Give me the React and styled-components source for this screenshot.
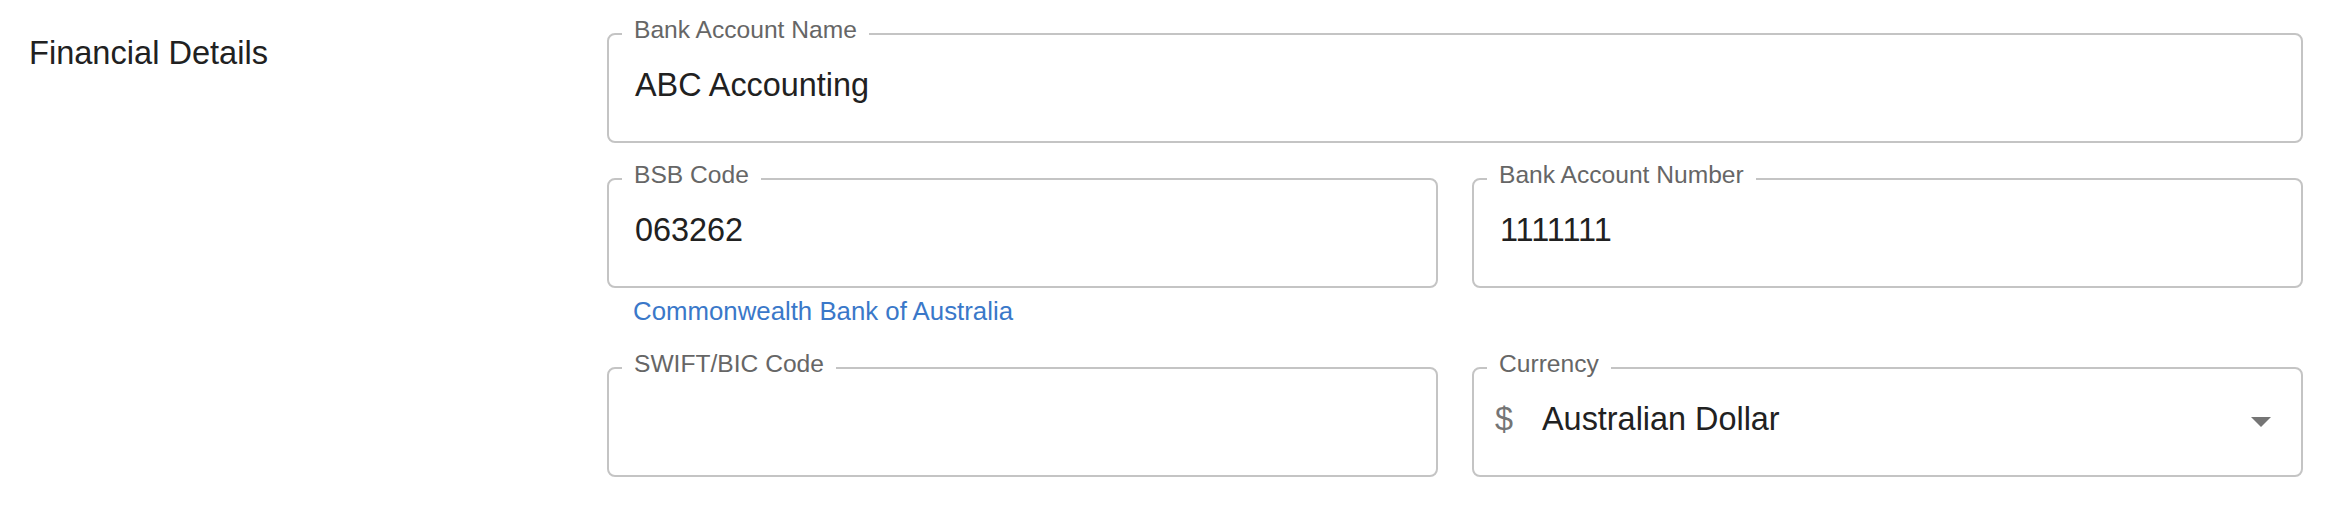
import React from 'react';
import styled, { createGlobalStyle } from 'styled-components';

const GlobalStyle = createGlobalStyle`
  body {
    margin: 0;
    background: #fff;
    font-family: "Liberation Sans", Arial, sans-serif;
  }
`;

const Section = styled.section`
  display: grid;
  grid-template-columns: 578px 1fr;
  box-sizing: border-box;
  height: 510px;
  padding: 29px 29px 0 29px;
`;

const SectionTitle = styled.h2`
  margin: 0;
  font-size: 32.6px;
  font-weight: 400;
  line-height: 48px;
  color: #212121;
`;

const FieldGrid = styled.div`
  display: grid;
  grid-template-columns: 1fr 1fr;
  column-gap: 34px;
  row-gap: 35px;
  align-content: start;
  padding-top: 4px;
`;

const Field = styled.div`
  grid-column: span ${(p) => p.$span || 1};
  min-width: 0;
`;

const Outline = styled.div`
  position: relative;
  box-sizing: border-box;
  height: 110px;
  display: flex;
  align-items: center;
  padding: 0 28px 5px ${(p) => (p.$select ? '21px' : '26px')};
  border: 2px solid #c4c4c4;
  border-radius: 8px;
`;

const FloatLabel = styled.span`
  position: absolute;
  top: -19px;
  left: 13px;
  padding: 0 12px;
  background: #fff;
  font-size: 24.6px;
  line-height: 28px;
  color: #666;
  white-space: nowrap;
`;

const Value = styled.span`
  font-size: 32.4px;
  line-height: 37px;
  color: #212121;
  white-space: nowrap;
`;

const Adornment = styled.span`
  margin-right: 29px;
  font-size: 32.4px;
  line-height: 37px;
  color: #757575;
`;

const Arrow = styled.svg`
  margin: 5px 2px 0 auto;
  flex-shrink: 0;
`;

const HelperText = styled.p`
  margin: 4px 0 2px 26px;
  font-size: 25.8px;
  line-height: 38px;
  color: #3a78c9;
`;

const TextField = ({ label, value, span, helper }) => (
  <Field $span={span}>
    <Outline>
      <FloatLabel>{label}</FloatLabel>
      <Value>{value}</Value>
    </Outline>
    {helper && <HelperText>{helper}</HelperText>}
  </Field>
);

const SelectField = ({ label, symbol, value }) => (
  <Field>
    <Outline $select>
      <FloatLabel>{label}</FloatLabel>
      <Adornment>{symbol}</Adornment>
      <Value>{value}</Value>
      <Arrow width="20" height="10" viewBox="0 0 20 10">
        <path d="M0 0 L20 0 L10 10 Z" fill="#757575" />
      </Arrow>
    </Outline>
  </Field>
);

const App = () => (
  <>
    <GlobalStyle />
    <Section>
      <SectionTitle>Financial Details</SectionTitle>
      <FieldGrid>
        <TextField span={2} label="Bank Account Name" value="ABC Accounting" />
        <TextField label="BSB Code" value="063262" helper="Commonwealth Bank of Australia" />
        <TextField label="Bank Account Number" value="1111111" />
        <TextField label="SWIFT/BIC Code" value="" />
        <SelectField label="Currency" symbol="$" value="Australian Dollar" />
      </FieldGrid>
    </Section>
  </>
);

export default App;
